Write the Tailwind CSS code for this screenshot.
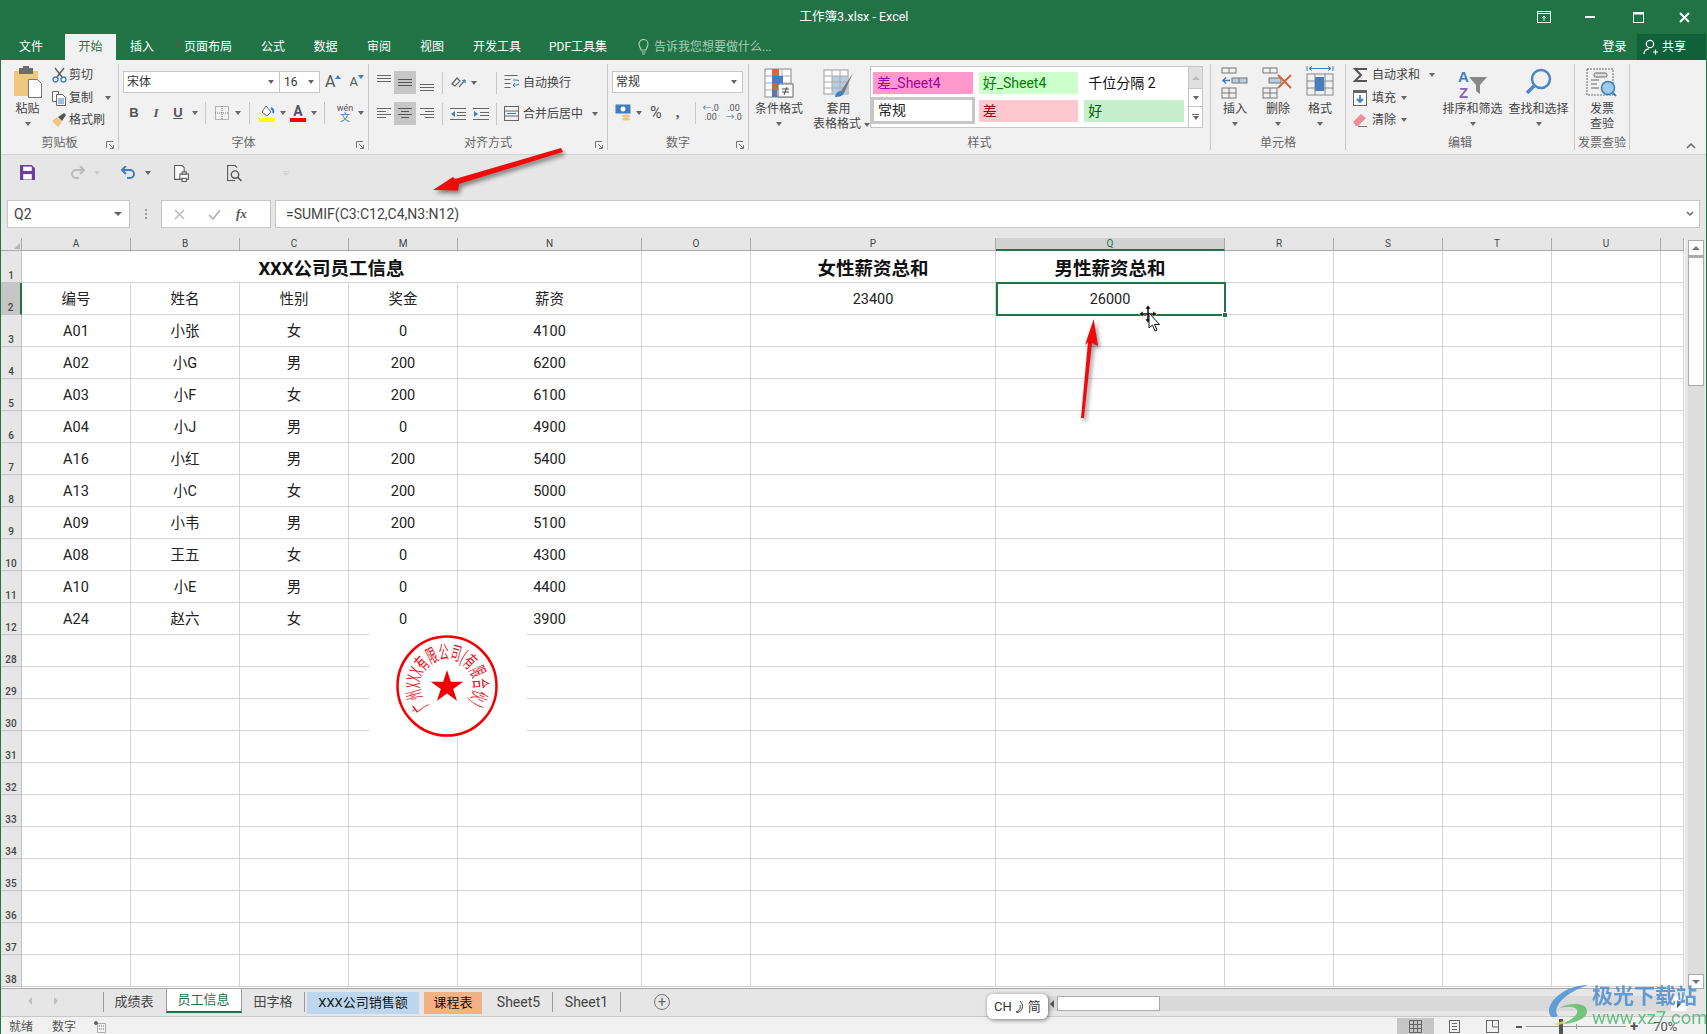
<!DOCTYPE html>
<html lang="zh-CN">
<head>
    <meta charset="UTF-8">
    <title>工作簿3.xlsx - Excel</title>
    <script src="https://cdn.jsdelivr.net/npm/@tailwindcss/browser@4"></script>
</head>
<body class="bg-[#e6e6e6]">
<div class="relative w-[1707px] h-[1034px] overflow-hidden flex flex-col border-x border-[#217346] text-[12px] text-[#444] font-['Roboto','Noto_Sans_CJK_SC',sans-serif]">

    <!-- title bar -->
    <div class="h-[34px] shrink-0 bg-[#217346] flex items-center justify-between text-white">
        <div class="w-[1520px] pl-[186px] text-center text-[12.5px]">工作簿3.xlsx - Excel</div>
        <div class="flex items-center w-[185px]">
            <svg class="ml-[16px]" width="14" height="12" viewBox="0 0 14 12" fill="none" stroke="#fff"><rect x="0.5" y="0.5" width="13" height="11"/><path d="M1 2.5h12M7 10V5M5 7l2-2 2 2"/></svg>
            <div class="ml-[34px] w-[10px] h-[2px] bg-white"></div>
            <svg class="ml-[38px]" width="11" height="11" viewBox="0 0 11 11" fill="none" stroke="#fff"><rect x="0.5" y="0.5" width="10" height="10"/><path d="M0 1.5h11" stroke-width="2"/></svg>
            <svg class="ml-[35px]" width="11" height="11" viewBox="0 0 11 11" stroke="#fff" stroke-width="2"><path d="M1 1l9 9M10 1l-9 9"/></svg>
        </div>
    </div>

    <!-- ribbon tabs -->
    <div class="h-[26px] shrink-0 bg-[#217346] flex items-stretch text-white text-[12px] leading-[26px]">
        <div class="w-[64px] pr-[4px] text-center">文件</div>
        <div class="w-[51px] text-center bg-[#f1f1f1] text-[#217346]">开始</div>
        <div class="w-[52px] text-center">插入</div>
        <div class="w-[80px] text-center">页面布局</div>
        <div class="w-[50px] text-center">公式</div>
        <div class="w-[55px] text-center">数据</div>
        <div class="w-[52px] text-center">审阅</div>
        <div class="w-[54px] text-center">视图</div>
        <div class="w-[76px] text-center">开发工具</div>
        <div class="w-[86px] text-center">PDF工具集</div>
        <div class="ml-[16px] flex items-center gap-[4px] text-[#a9cdb8]">
            <svg width="13" height="16" viewBox="0 0 13 16" fill="none" stroke="#a9cdb8" stroke-width="1.2"><path d="M4 11c0-2-2-3-2-6a4.5 4.5 0 0 1 9 0c0 3-2 4-2 6zM4.5 13h4M5 15h3"/></svg>
            <span>告诉我您想要做什么...</span>
        </div>
        <div class="ml-auto w-[45px] text-center">登录</div>
        <div class="ml-[0px] w-[69px] bg-[#10603a] flex items-center pl-[6px] gap-[3px]">
            <svg width="16" height="16" viewBox="0 0 16 16" fill="none" stroke="#fff" stroke-width="1.2"><circle cx="7" cy="5" r="3.7"/><path d="M1 15c0-3 2-5 5-5.2M10 13h5M12.5 10.5v5"/></svg>
            <span>共享</span>
        </div>
    </div>

    <!-- ribbon -->
    <div class="h-[95px] shrink-0 bg-[#f1f1f1] border-b border-[#d2d2d2] flex items-start pt-[4px]">

        <!-- clipboard -->
        <div class="relative w-[118px] h-[86px] border-r border-[#c8c8c8] flex flex-col">
            <div class="h-[72px] flex">
                <div class="w-[50px] flex flex-col items-center pl-[3px]">
                    <svg class="h-[36px]" width="30" height="36" viewBox="0 0 30 36"><rect x="1" y="7" width="24" height="25" fill="#f0c77f"/><rect x="6" y="4" width="14" height="6" fill="#6b6b6b"/><rect x="10" y="2" width="6" height="4" fill="#6b6b6b"/><path d="M15.500 15.500h9l4 4v14h-13z" fill="#fff" stroke="#777"/></svg>
                    <div class="mt-[2px] leading-[15px]">粘贴</div>
                    <div class="mt-[5px] w-0 h-0 border-x-[3px] border-x-transparent border-t-[4px] border-t-[#666]"></div>
                </div>
                <div class="flex flex-col leading-[22.5px] pt-0">
                    <div class="flex items-center h-[22.5px]">
                        <svg class="w-[18px]" width="18" height="16" viewBox="0 0 18 16" fill="none" stroke-width="1.3"><path d="M4 1l7 9M13 1l-7 9" stroke="#555"/><circle cx="4.500" cy="12.500" r="2.500" stroke="#3f7fbf"/><circle cx="12.500" cy="12.500" r="2.500" stroke="#3f7fbf"/></svg>
                        <span>剪切</span>
                    </div>
                    <div class="flex items-center h-[22.5px]">
                        <svg class="w-[18px]" width="18" height="16" viewBox="0 0 18 16" fill="#fff" stroke="#666"><path d="M1.500 1.500h6v10h-6z"/><path d="M5.500 4.500h6l3 3v8h-9z"/><path d="M7 9h6M7 11h6M7 13h6" stroke="#3f7fbf"/></svg>
                        <span>复制</span>
                        <div class="ml-[12px] w-0 h-0 border-x-[3px] border-x-transparent border-t-[4px] border-t-[#666]"></div>
                    </div>
                    <div class="flex items-center h-[22.5px]">
                        <svg class="w-[18px]" width="18" height="16" viewBox="0 0 18 16"><path d="M1 9l5-4 5 5-4 5z" fill="#f0c77f"/><path d="M7 5l6-4 2 2-4 6z" fill="#555"/></svg>
                        <span>格式刷</span>
                    </div>
                </div>
            </div>
            <div class="h-[14px] leading-[14px] text-center text-[#666]">剪贴板</div>
            <svg class="absolute right-[4px] bottom-[1px]" width="8" height="8" viewBox="0 0 8 8" fill="none" stroke="#777"><path d="M.5 7V.5H7M3 3l4 4M4 7.500h3.500V4"/></svg>
        </div>

        <!-- font -->
        <div class="relative w-[250px] h-[86px] border-r border-[#c8c8c8] flex flex-col">
            <div class="h-[72px] pl-[4px] pt-[7px] flex flex-col gap-[8px]">
                <div class="flex h-[22px] items-center">
                    <div class="w-[157px] h-[22px] bg-white border border-[#c6c6c6] flex items-center justify-between pl-[3px] pr-[5px] text-[#333]">
                        <span>宋体</span>
                        <div class="w-0 h-0 border-x-[3px] border-x-transparent border-t-[4px] border-t-[#666]"></div>
                    </div>
                    <div class="w-[40px] h-[22px] bg-white border border-l-0 border-[#c6c6c6] flex items-center justify-between pl-[4px] pr-[5px] text-[#333]">
                        <span>16</span>
                        <div class="w-0 h-0 border-x-[3px] border-x-transparent border-t-[4px] border-t-[#666]"></div>
                    </div>
                    <div class="ml-[5px] flex items-start text-[16px] leading-[18px] text-[#555]"><span>A</span><span class="w-0 h-0 mt-[2px] border-x-[3px] border-x-transparent border-b-[4px] border-b-[#3f7fbf]"></span></div>
                    <div class="ml-[8px] flex items-start text-[13px] leading-[18px] text-[#555]"><span>A</span><span class="w-0 h-0 mt-[2px] border-x-[3px] border-x-transparent border-t-[4px] border-t-[#3f7fbf]"></span></div>
                </div>
                <div class="flex h-[23px] items-center text-[#555] text-[13px]">
                    <span class="w-[22px] text-center font-bold font-['Liberation_Sans']">B</span>
                    <span class="w-[22px] text-center italic font-bold font-['Liberation_Serif']">I</span>
                    <span class="w-[22px] text-center underline font-bold font-['Liberation_Sans']">U</span>
                    <div class="ml-[3px] w-0 h-0 border-x-[3px] border-x-transparent border-t-[4px] border-t-[#666]"></div>
                    <div class="ml-[7px] w-px h-[22px] bg-[#c8c8c8]"></div>
                    <svg class="ml-[9px]" width="14" height="14" viewBox="0 0 14 14" fill="none" stroke="#777" stroke-dasharray="1 1"><rect x=".5" y=".5" width="13" height="13"/><path d="M7 0v14M0 7h14"/></svg>
                    <div class="ml-[6px] w-0 h-0 border-x-[3px] border-x-transparent border-t-[4px] border-t-[#666]"></div>
                    <div class="ml-[8px] w-px h-[22px] bg-[#c8c8c8]"></div>
                    <svg class="ml-[9px]" width="16" height="18" viewBox="0 0 16 18"><path d="M3 8l4-6 5 6-4 4z" fill="#fff" stroke="#666"/><path d="M12 4c2 1 3 3 2 5" stroke="#3f7fbf" stroke-width="2" fill="none"/><rect y="14" width="16" height="4" fill="#ffff00"/></svg>
                    <div class="ml-[5px] w-0 h-0 border-x-[3px] border-x-transparent border-t-[4px] border-t-[#666]"></div>
                    <div class="ml-[4px] w-[16px] flex flex-col items-center text-[14px] leading-[14px] font-bold">A<div class="w-[16px] h-[4px] bg-[#ff0000]"></div></div>
                    <div class="ml-[5px] w-0 h-0 border-x-[3px] border-x-transparent border-t-[4px] border-t-[#666]"></div>
                    <div class="ml-[7px] w-px h-[22px] bg-[#c8c8c8]"></div>
                    <div class="ml-[11px] w-[18px] flex flex-col items-center text-[9px] leading-[9px]"><span>wén</span><span class="text-[#3f7fbf] text-[10px]">文</span></div>
                    <div class="ml-[4px] w-0 h-0 border-x-[3px] border-x-transparent border-t-[4px] border-t-[#666]"></div>
                </div>
            </div>
            <div class="h-[14px] leading-[14px] text-center text-[#666]">字体</div>
            <svg class="absolute right-[4px] bottom-[1px]" width="8" height="8" viewBox="0 0 8 8" fill="none" stroke="#777"><path d="M.5 7V.5H7M3 3l4 4M4 7.500h3.500V4"/></svg>
        </div>

        <!-- alignment -->
        <div class="relative w-[239px] h-[86px] border-r border-[#c8c8c8] flex flex-col">
            <div class="h-[72px] pl-[4px] pt-[7px] flex flex-col gap-[8px]">
                <div class="flex h-[23px] items-center">
                    <div class="w-[21px] h-[23px] flex justify-center pt-[4px]"><svg width="14" height="8" viewBox="0 0 14 8" stroke="#666"><path d="M0 .5h14M0 3.500h14M0 6.500h14"/></svg></div>
                    <div class="w-[22px] h-[23px] flex justify-center items-center bg-[#c6c6c6]"><svg width="14" height="8" viewBox="0 0 14 8" stroke="#555"><path d="M0 .5h14M0 3.500h14M0 6.500h14"/></svg></div>
                    <div class="w-[21px] h-[23px] flex justify-center items-end pb-[3px]"><svg width="14" height="8" viewBox="0 0 14 8" stroke="#666"><path d="M0 1.500h14M0 4.500h14M0 7.500h14"/></svg></div>
                    <div class="ml-[5px] w-px h-[22px] bg-[#c8c8c8]"></div>
                    <svg class="ml-[8px]" width="16" height="14" viewBox="0 0 16 14" fill="none" stroke="#666" stroke-width="1.2"><path d="M1 8l5-6 3 3-5 5zM8 11l6-7"/><path d="M14 4l-3 .5M14 4v3" stroke="#3f7fbf"/></svg>
                    <div class="ml-[4px] w-0 h-0 border-x-[3px] border-x-transparent border-t-[4px] border-t-[#666]"></div>
                    <div class="ml-[19px] w-px h-[22px] bg-[#c8c8c8]"></div>
                    <svg class="ml-[7px]" width="15" height="15" viewBox="0 0 15 15" fill="none" stroke="#666"><path d="M.5.5h13M.5 4.500h6M.5 8.500h6M.5 12.500h6"/><path d="M9 10h4a2 2 0 0 0 0-5H9M9 10l2-2M9 10l2 2" stroke="#3f7fbf"/></svg>
                    <span class="ml-[4px]">自动换行</span>
                </div>
                <div class="flex h-[23px] items-center">
                    <div class="w-[21px] flex justify-center"><svg width="14" height="11" viewBox="0 0 14 11" stroke="#666"><path d="M0 .5h14M0 3.500h9M0 6.500h14M0 9.500h9"/></svg></div>
                    <div class="w-[22px] h-[23px] flex justify-center items-center bg-[#c6c6c6]"><svg width="14" height="11" viewBox="0 0 14 11" stroke="#555"><path d="M0 .5h14M3 3.500h8M0 6.500h14M3 9.500h8"/></svg></div>
                    <div class="w-[21px] flex justify-center"><svg width="14" height="11" viewBox="0 0 14 11" stroke="#666"><path d="M0 .5h14M5 3.500h9M0 6.500h14M5 9.500h9"/></svg></div>
                    <div class="ml-[5px] w-px h-[22px] bg-[#c8c8c8]"></div>
                    <svg class="ml-[7px]" width="16" height="12" viewBox="0 0 16 12" stroke="#666"><path d="M0 .5h16M7 4.500h9M7 7.500h9M0 11.500h16"/><path d="M5 3L1 6l4 3z" fill="#3f7fbf" stroke="none"/></svg>
                    <svg class="ml-[7px]" width="16" height="12" viewBox="0 0 16 12" stroke="#666"><path d="M0 .5h16M7 4.500h9M7 7.500h9M0 11.500h16"/><path d="M1 3l4 3-4 3z" fill="#3f7fbf" stroke="none"/></svg>
                    <div class="ml-[7px] w-px h-[22px] bg-[#c8c8c8]"></div>
                    <svg class="ml-[7px]" width="15" height="15" viewBox="0 0 15 15" fill="none" stroke="#666"><rect x=".5" y=".5" width="14" height="14"/><path d="M0 5h15M0 10h15"/><path d="M3 7.500h9" stroke="#3f7fbf"/></svg>
                    <span class="ml-[4px]">合并后居中</span>
                    <div class="ml-[9px] w-0 h-0 border-x-[3px] border-x-transparent border-t-[4px] border-t-[#666]"></div>
                </div>
            </div>
            <div class="h-[14px] leading-[14px] text-center text-[#666]">对齐方式</div>
            <svg class="absolute right-[4px] bottom-[1px]" width="8" height="8" viewBox="0 0 8 8" fill="none" stroke="#777"><path d="M.5 7V.5H7M3 3l4 4M4 7.500h3.500V4"/></svg>
        </div>

        <!-- number -->
        <div class="relative w-[141px] h-[86px] border-r border-[#c8c8c8] flex flex-col">
            <div class="h-[72px] pl-[4px] pt-[7px] flex flex-col gap-[8px]">
                <div class="w-[131px] h-[22px] bg-white border border-[#c6c6c6] flex items-center justify-between pl-[3px] pr-[5px] text-[#333]">
                    <span>常规</span>
                    <div class="w-0 h-0 border-x-[3px] border-x-transparent border-t-[4px] border-t-[#666]"></div>
                </div>
                <div class="flex h-[23px] items-center text-[#555]">
                    <svg class="ml-[3px]" width="17" height="17" viewBox="0 0 17 17"><rect x=".5" y=".5" width="15" height="9" fill="#3f7fbf"/><circle cx="8" cy="5" r="2.500" fill="#fff"/><ellipse cx="11" cy="12" rx="4" ry="1.500" fill="#f0c77f"/><ellipse cx="11" cy="15" rx="4" ry="1.500" fill="#f0c77f"/></svg>
                    <div class="ml-[4px] w-0 h-0 border-x-[3px] border-x-transparent border-t-[4px] border-t-[#666]"></div>
                    <span class="ml-[8px] text-[16px]">%</span>
                    <span class="ml-[14px] text-[15px] font-bold font-['Liberation_Serif']">,</span>
                    <div class="ml-[16px] w-px h-[22px] bg-[#c8c8c8]"></div>
                    <div class="ml-[6px] w-[16px] text-[9px] leading-[9px] text-center"><span class="text-[#3f7fbf]">←</span>.0<br>.00</div>
                    <div class="ml-[7px] w-[16px] text-[9px] leading-[9px] text-center">.00<br><span class="text-[#3f7fbf]">→</span>.0</div>
                </div>
            </div>
            <div class="h-[14px] leading-[14px] text-center text-[#666]">数字</div>
            <svg class="absolute right-[4px] bottom-[1px]" width="8" height="8" viewBox="0 0 8 8" fill="none" stroke="#777"><path d="M.5 7V.5H7M3 3l4 4M4 7.500h3.500V4"/></svg>
        </div>

        <!-- styles -->
        <div class="w-[462px] h-[86px] border-r border-[#c8c8c8] flex flex-col">
            <div class="h-[72px] flex">
                <div class="w-[58px] ml-[1px] flex flex-col items-center">
                    <svg class="h-[36px]" width="30" height="36" viewBox="0 0 30 36" fill="none"><rect x="1" y="5" width="26" height="28" fill="#fff" stroke="#888"/><path d="M1 12h26M1 19h26M1 26h26M9 5v28M18 5v28" stroke="#aaa"/><rect x="8" y="5" width="7" height="7" fill="#d6663e"/><rect x="8" y="12" width="11" height="7" fill="#4a7ebb"/><rect x="8" y="19" width="8" height="7" fill="#d6663e"/><rect x="8" y="26" width="5" height="7" fill="#4a7ebb"/><rect x="14" y="20" width="15" height="13" fill="#fff" stroke="#666"/><path d="M18 25h7M18 28h7M23 23l-3 8" stroke="#444"/></svg>
                    <div class="mt-[2px] leading-[15px]">条件格式</div>
                    <div class="mt-[5px] w-0 h-0 border-x-[3px] border-x-transparent border-t-[4px] border-t-[#666]"></div>
                </div>
                <div class="w-[61px] flex flex-col items-center">
                    <svg class="h-[36px]" width="32" height="36" viewBox="0 0 32 36" fill="none"><rect x="1" y="6" width="24" height="24" fill="#fff" stroke="#999"/><rect x="9" y="12" width="16" height="18" fill="#b8cde4"/><path d="M1 12h24M1 18h24M1 24h24M9 6v24M17 6v24" stroke="#aaa"/><path d="M30 9L18 27l3 2z" fill="#777"/><path d="M18 27c-3 0-6 3-6 6 4 0 8-1 9-4z" fill="#3f7fbf"/></svg>
                    <div class="mt-[2px] leading-[15px]">套用</div>
                    <div class="leading-[15px] whitespace-nowrap flex items-center gap-[3px] ml-[6px]">表格格式<div class="w-0 h-0 border-x-[3px] border-x-transparent border-t-[4px] border-t-[#666]"></div></div>
                </div>
                <div class="ml-[1px] mt-[2px] w-[319px] h-[62px] bg-white border border-[#c6c6c6] grid grid-cols-3 grid-rows-[22px_22px] gap-x-[6px] gap-y-[6px] pl-[2px] pt-[5px] pr-[4px] text-[14px] leading-[22px]">
                    <div class="h-[22px] bg-[#ff99cc] text-[#a3009e] pl-[4px]">差_Sheet4</div>
                    <div class="h-[22px] bg-[#ccffcc] text-[#008000] pl-[4px]">好_Sheet4</div>
                    <div class="h-[22px] text-[#111] pl-[4px]">千位分隔 2</div>
                    <div class="h-[27px] -mt-[3px] -ml-[2px] mr-[-2px] bg-white border-[3px] border-[#c6c6c6] text-[#222] pl-[4px] leading-[21px]">常规</div>
                    <div class="h-[22px] bg-[#ffc7ce] text-[#9c0006] pl-[4px]">差</div>
                    <div class="h-[22px] bg-[#c6efce] text-[#006100] pl-[4px]">好</div>
                </div>
                <div class="mt-[2px] w-[14px] h-[62px] flex flex-col border border-l-0 border-[#c6c6c6]">
                    <div class="h-[21px] bg-[#e0e0e0] flex justify-center items-center"><div class="w-0 h-0 border-x-[4px] border-x-transparent border-b-[4px] border-b-[#bbb]"></div></div>
                    <div class="h-[19px] bg-white border-y border-[#c6c6c6] flex justify-center items-center"><div class="w-0 h-0 border-x-[3px] border-x-transparent border-t-[4px] border-t-[#666]"></div></div>
                    <div class="flex-1 bg-white flex flex-col justify-center items-center gap-[1px]"><div class="w-[7px] h-px bg-[#666]"></div><div class="w-0 h-0 border-x-[3px] border-x-transparent border-t-[4px] border-t-[#666]"></div></div>
                </div>
            </div>
            <div class="h-[14px] leading-[14px] text-center text-[#666]">样式</div>
        </div>

        <!-- cells -->
        <div class="w-[135px] h-[86px] border-r border-[#c8c8c8] flex flex-col">
            <div class="h-[72px] flex pl-[2px]">
                <div class="w-[44px] flex flex-col items-center">
                    <svg class="h-[36px]" width="30" height="36" viewBox="0 0 30 36" fill="none" stroke="#777"><rect x="2" y="4" width="14" height="5"/><path d="M9 4v5"/><rect x="12" y="14" width="15" height="5" fill="#b8cde4"/><path d="M19 14v5"/><rect x="2" y="24" width="14" height="10"/><path d="M9 24v10M2 29h14"/><path d="M10 16.500H3M6 13.500l-3 3 3 3" stroke="#3f7fbf" stroke-width="1.500"/></svg>
                    <div class="mt-[2px] leading-[15px]">插入</div>
                    <div class="mt-[5px] w-0 h-0 border-x-[3px] border-x-transparent border-t-[4px] border-t-[#666]"></div>
                </div>
                <div class="w-[42px] flex flex-col items-center">
                    <svg class="h-[36px]" width="32" height="36" viewBox="0 0 32 36" fill="none" stroke="#777"><rect x="1" y="4" width="14" height="5"/><path d="M8 4v5"/><rect x="7" y="14" width="12" height="5" fill="#b8cde4"/><rect x="1" y="24" width="14" height="10"/><path d="M8 24v10M1 29h14"/><path d="M16 11l13 13M29 11L16 24" stroke="#d6663e" stroke-width="2"/></svg>
                    <div class="mt-[2px] leading-[15px]">删除</div>
                    <div class="mt-[5px] w-0 h-0 border-x-[3px] border-x-transparent border-t-[4px] border-t-[#666]"></div>
                </div>
                <div class="w-[42px] flex flex-col items-center">
                    <svg class="h-[36px]" width="28" height="36" viewBox="0 0 28 36" fill="none" stroke="#888"><path d="M1 2v5M27 2v5M3 4.500h22M3 4.500l3-2M3 4.500l3 2M25 4.500l-3-2M25 4.500l-3 2" stroke="#3f7fbf"/><rect x="1" y="10" width="26" height="21"/><path d="M1 17h26M1 24h26M9 10v21M19 10v21"/><rect x="9" y="13" width="9" height="14" fill="#4a7ebb" stroke="none"/></svg>
                    <div class="mt-[2px] leading-[15px]">格式</div>
                    <div class="mt-[5px] w-0 h-0 border-x-[3px] border-x-transparent border-t-[4px] border-t-[#666]"></div>
                </div>
            </div>
            <div class="h-[14px] leading-[14px] text-center text-[#666]">单元格</div>
        </div>

        <!-- editing -->
        <div class="w-[229px] h-[86px] border-r border-[#c8c8c8] flex flex-col">
            <div class="h-[72px] flex">
                <div class="w-[96px] pl-[6px] flex flex-col">
                    <div class="flex items-center h-[22.5px]">
                        <svg class="w-[20px]" width="20" height="16" viewBox="0 0 20 16" fill="none" stroke="#555" stroke-width="2"><path d="M15 2H3l6 6-6 6h12"/></svg>
                        <span>自动求和</span>
                        <div class="ml-[9px] w-0 h-0 border-x-[3px] border-x-transparent border-t-[4px] border-t-[#666]"></div>
                    </div>
                    <div class="flex items-center h-[22.5px]">
                        <svg class="w-[20px]" width="20" height="16" viewBox="0 0 20 16" fill="#fff" stroke="#666"><rect x="1.500" y=".5" width="13" height="15"/><path d="M1 2h14" stroke-width="2"/><path d="M8 5v7M5 9l3 3 3-3" stroke="#3f7fbf" stroke-width="1.800" fill="none"/></svg>
                        <span>填充</span>
                        <div class="ml-[5px] w-0 h-0 border-x-[3px] border-x-transparent border-t-[4px] border-t-[#666]"></div>
                    </div>
                    <div class="flex items-center h-[22.5px]">
                        <svg class="w-[20px]" width="20" height="16" viewBox="0 0 20 16"><path d="M1 10l8-8 5 4-8 8H4z" fill="#eb8c9f"/><path d="M6 14.500h9" stroke="#777"/></svg>
                        <span>清除</span>
                        <div class="ml-[5px] w-0 h-0 border-x-[3px] border-x-transparent border-t-[4px] border-t-[#666]"></div>
                    </div>
                </div>
                <div class="w-[61px] flex flex-col items-center whitespace-nowrap">
                    <svg class="h-[36px]" width="32" height="36" viewBox="0 0 32 36"><text x="1" y="18" font-size="15" font-weight="700" fill="#3f7fbf" font-family="Liberation Sans">A</text><text x="2" y="34" font-size="15" font-weight="700" fill="#8e5fb5" font-family="Liberation Sans">Z</text><path d="M12 13h18l-7 8v9l-4-3v-6z" fill="#888"/></svg>
                    <div class="mt-[2px] leading-[15px]">排序和筛选</div>
                    <div class="mt-[5px] w-0 h-0 border-x-[3px] border-x-transparent border-t-[4px] border-t-[#666]"></div>
                </div>
                <div class="ml-[4px] w-[63px] flex flex-col items-center whitespace-nowrap">
                    <svg class="h-[36px]" width="30" height="36" viewBox="0 0 30 36" fill="none"><circle cx="17" cy="15" r="9" stroke="#4a86c5" stroke-width="2.500"/><path d="M10 22l-7 7" stroke="#4a86c5" stroke-width="3.500"/></svg>
                    <div class="mt-[2px] leading-[15px]">查找和选择</div>
                    <div class="mt-[5px] w-0 h-0 border-x-[3px] border-x-transparent border-t-[4px] border-t-[#666]"></div>
                </div>
            </div>
            <div class="h-[14px] leading-[14px] text-center text-[#666]">编辑</div>
        </div>

        <!-- invoice -->
        <div class="w-[55px] h-[86px] border-r border-[#c8c8c8] flex flex-col">
            <div class="h-[72px] flex flex-col items-center">
                <svg class="h-[36px]" width="34" height="36" viewBox="0 0 34 36" fill="none" stroke="#666"><rect x="2" y="5" width="26" height="26" fill="#f1f1f1" stroke-dasharray="2 1"/><rect x="9" y="9" width="13" height="4" rx="1.500" fill="#ddd"/><path d="M6 16h8M6 20h6M6 24h8"/><circle cx="23" cy="24" r="6.500" fill="#9cc9ec" stroke="#3f7fbf" stroke-width="1.500"/><path d="M28 29l3 3" stroke="#3f7fbf" stroke-width="2"/></svg>
                <div class="mt-[2px] leading-[15px]">发票</div>
                <div class="leading-[15px]">查验</div>
            </div>
            <div class="h-[14px] leading-[14px] text-center text-[#666] whitespace-nowrap">发票查验</div>
        </div>
        <svg class="mt-[78px] ml-[56px]" width="10" height="7" viewBox="0 0 10 7" fill="none" stroke="#666" stroke-width="1.500"><path d="M1 6l4-4 4 4"/></svg>
    </div>

    <!-- quick access -->
    <div class="h-[45px] shrink-0 bg-[#e6e6e6] flex items-start pt-[10px]">
        <svg class="ml-[19px]" width="15" height="15" viewBox="0 0 14 14"><path d="M0 0h11l3 3v11H0z" fill="#6a429c"/><rect x="3" y="1.500" width="8" height="4" fill="#fff"/><rect x="3" y="8.500" width="8" height="5" fill="#fff"/></svg>
        <svg class="ml-[35px] mt-[1px]" width="15" height="13" viewBox="0 0 15 13" fill="none" stroke="#bbb" stroke-width="2"><path d="M14 4H6a4 4 0 0 0 0 8h3M10 0l4 4-4 4"/></svg>
        <div class="ml-[9px] mt-[6px] w-0 h-0 border-x-[3px] border-x-transparent border-t-[4px] border-t-[#ccc]"></div>
        <svg class="ml-[21px] mt-[1px]" width="15" height="13" viewBox="0 0 15 13" fill="none" stroke="#3f7fbf" stroke-width="2"><path d="M1 4h8a4 4 0 0 1 0 8H6M5 0L1 4l4 4"/></svg>
        <div class="ml-[9px] mt-[6px] w-0 h-0 border-x-[3px] border-x-transparent border-t-[4px] border-t-[#666]"></div>
        <svg class="ml-[22px]" width="17" height="17" viewBox="0 0 16 16" fill="#fff" stroke="#555"><path d="M1.500.5h7l2 2v11h-9z"/><rect x="6.500" y="8.500" width="8" height="5"/><rect x="8.500" y="6.500" width="4" height="2"/><rect x="8.500" y="12.500" width="4" height="3"/></svg>
        <svg class="ml-[36px]" width="17" height="17" viewBox="0 0 16 16" fill="none" stroke="#555"><path d="M10.500 2.500l-2-2h-7v14h7"/><circle cx="8.500" cy="9" r="3.500" stroke-width="1.300"/><path d="M11 11.500l3.500 3.500" stroke-width="1.500"/></svg>
        <div class="ml-[40px] mt-[6px] flex flex-col items-center gap-px"><div class="w-[6px] h-px bg-[#d4d4d4]"></div><div class="w-0 h-0 border-x-[3px] border-x-transparent border-t-[3px] border-t-[#d4d4d4]"></div></div>
    </div>

    <!-- formula bar -->
    <div class="h-[28px] shrink-0 flex text-[#444]">
        <div class="ml-[6px] w-[123px] bg-white border border-[#c6c6c6] flex items-center justify-between pl-[6px] pr-[7px] text-[14px]">
            <span>Q2</span>
            <div class="w-0 h-0 border-x-[4px] border-x-transparent border-t-[4px] border-t-[#666]"></div>
        </div>
        <div class="w-[31px] flex flex-col items-center justify-center gap-[2px]">
            <div class="w-[2px] h-[2px] bg-[#999]"></div><div class="w-[2px] h-[2px] bg-[#999]"></div><div class="w-[2px] h-[2px] bg-[#999]"></div>
        </div>
        <div class="w-[110px] bg-white border border-[#c6c6c6] flex items-center">
            <svg class="ml-[12px]" width="11" height="11" viewBox="0 0 11 11" stroke="#bbb" stroke-width="1.500"><path d="M1 1l9 9M10 1l-9 9"/></svg>
            <svg class="ml-[23px]" width="13" height="11" viewBox="0 0 13 11" fill="none" stroke="#bbb" stroke-width="2"><path d="M1 6l4 4 7-9"/></svg>
            <span class="ml-[15px] italic font-bold font-['Liberation_Serif'] text-[13px] text-[#555]">fx</span>
        </div>
        <div class="ml-[4px] w-[1425px] bg-white border border-[#c6c6c6] flex items-center justify-between pl-[10px] pr-[5px] text-[14px]">
            <span>=SUMIF(C3:C12,C4,N3:N12)</span>
            <svg width="8" height="6" viewBox="0 0 8 6" fill="none" stroke="#666" stroke-width="1.500"><path d="M1 1l3 3 3-3"/></svg>
        </div>
    </div>

    <!-- sheet and vertical scrollbar -->
    <div class="h-[10px] shrink-0"></div>
    <div class="h-[751px] shrink-0 flex">
        <div id="sheet" class="relative w-[1684px] h-[751px] overflow-hidden bg-white border-b border-[#a8a8a8]"></div>
        <div class="ml-[3px] w-[16px] mt-[2px] h-[749px] flex flex-col bg-[#dcdcdc]">
            <div class="h-[16px] bg-white border border-[#ababab] flex justify-center items-center"><div class="w-0 h-0 border-x-[4px] border-x-transparent border-b-[4px] border-b-[#777]"></div></div>
            <div class="h-[130px] bg-white border border-t-2 border-[#ababab]"></div>
            <div class="flex-1"></div>
            <div class="h-[15px] bg-white border border-[#ababab] flex justify-center items-center"><div class="w-0 h-0 border-x-[4px] border-x-transparent border-t-[4px] border-t-[#777]"></div></div>
        </div>
    </div>

    <!-- sheet tabs -->
    <div class="h-[28px] shrink-0 flex items-start bg-[#e6e6e6] border-b border-[#c8c8c8] text-[13px] text-[#444]">
        <div class="w-[102px] h-[24px] flex items-center pl-[27px] gap-[22px] text-[#c0c0c0]">
            <div class="w-0 h-0 border-y-[4px] border-y-transparent border-r-[4px] border-r-[#c0c0c0]"></div>
            <div class="w-0 h-0 border-y-[4px] border-y-transparent border-l-[4px] border-l-[#c0c0c0]"></div>
        </div>
        <div class="w-[63px] mt-[3px] h-[20px] leading-[20px] pr-[2px] text-center border-l border-[#9a9a9a]">成绩表</div>
        <div class="w-[76px] h-[24px] leading-[22px] pr-[1px] text-center bg-white text-[#217346] border-x border-[#9a9a9a] border-b-2 border-b-[#217346]">员工信息</div>
        <div class="w-[63px] mt-[3px] h-[20px] leading-[20px] text-center border-r border-[#9a9a9a]">田字格</div>
        <div class="ml-[2px] w-[112px] mt-[3px] h-[22px] leading-[21px] text-center bg-[#bdd7ee] text-[#111]">XXX公司销售额</div>
        <div class="ml-[5px] w-[58px] mt-[3px] h-[22px] leading-[21px] text-center bg-[#f4b183] text-[#111]">课程表</div>
        <div class="ml-[3px] w-[68px] mt-[3px] h-[20px] leading-[20px] text-center text-[14px] border-r border-[#9a9a9a]">Sheet5</div>
        <div class="w-[68px] mt-[3px] h-[20px] leading-[20px] text-center text-[14px] border-r border-[#9a9a9a]">Sheet1</div>
        <div class="ml-[33px] mt-[5px] w-[16px] h-[16px] rounded-full border border-[#777] flex items-center justify-center text-[14px] leading-none text-[#666]">+</div>
        <div class="ml-[377px] mt-[7px] w-[640px] h-[15px] flex bg-[#d9d9d9] items-center">
            <div class="ml-[3px] w-0 h-0 border-y-[4px] border-y-transparent border-r-[4px] border-r-[#555]"></div>
            <div class="ml-[3px] w-[103px] h-[15px] bg-white border border-[#ababab]"></div>
            <div class="ml-auto w-[16px] h-[15px] bg-white flex items-center justify-center"><div class="w-0 h-0 border-y-[4px] border-y-transparent border-l-[4px] border-l-[#555]"></div></div>
        </div>
    </div>

    <!-- status bar -->
    <div class="flex-1 bg-[#f1f1f1] flex items-center text-[12px] text-[#555]">
        <span class="ml-[8px]">就绪</span>
        <span class="ml-[19px]">数字</span>
        <svg class="ml-[18px]" width="12" height="12" viewBox="0 0 12 12" fill="none" stroke="#666"><rect x="3.500" y="2.500" width="8" height="9" stroke-dasharray="1 1"/><circle cx="2" cy="2" r="1.500" fill="#666"/><path d="M5 5h5M5 8h5" stroke-dasharray="1 1"/></svg>
        <div class="ml-[1291px] w-[37px] h-[17px] bg-[#c6c6c6] flex justify-center items-center">
            <svg width="13" height="13" viewBox="0 0 13 13" fill="none" stroke="#666"><rect x=".5" y=".5" width="12" height="12"/><path d="M4.500 0v13M8.500 0v13M0 4.500h13M0 8.500h13"/></svg>
        </div>
        <svg class="ml-[14px]" width="13" height="13" viewBox="0 0 13 13" fill="none" stroke="#666"><rect x="1.500" y=".5" width="10" height="12"/><path d="M4 3.500h5M4 6.500h5M4 9.500h5"/></svg>
        <svg class="ml-[25px]" width="13" height="13" viewBox="0 0 13 13" fill="none" stroke="#666"><rect x=".5" y=".5" width="12" height="12"/><path d="M6.500 0v7M6.500 7h6"/></svg>
        <div class="ml-[17px] w-[6px] h-[2px] bg-[#555]"></div>
        <div class="relative ml-[4px] w-[100px] h-px bg-[#9a9a9a]">
            <div class="absolute left-[33px] -top-[7px] w-[4px] h-[15px] bg-[#555]"></div>
            <div class="absolute left-[50px] -top-[2px] w-px h-[5px] bg-[#9a9a9a]"></div>
        </div>
        <span class="ml-[4px] text-[15px] leading-none font-bold">+</span>
        <span class="ml-[15px] text-[13px]">70%</span>
    </div>

    <!-- stamp pasted over the sheet -->
    <div class="absolute left-[368px] top-[634px] w-[158px] h-[104px] pr-[2px] bg-white flex items-center justify-center">
        <svg width="104" height="104" viewBox="0 0 104 104">
            <circle cx="52" cy="52" r="49.500" fill="none" stroke="#f20000" stroke-width="2.500"/>
            <polygon fill="#f00000" points="52,36 55.800,47.700 68.200,47.700 58.200,55 62,66.800 52,59.500 42,66.800 45.800,55 35.800,47.700 48.200,47.700"/>
            <defs><path id="stampArc" d="M33.600 71.700 A27 27 0 1 1 74.100 67.400"/></defs>
            <text font-size="19" fill="#e8141c" font-family="Noto Sans CJK SC, sans-serif"><textPath href="#stampArc" textLength="123" lengthAdjust="spacingAndGlyphs">广州XXX有限公司(有限合伙)</textPath></text>
        </svg>
    </div>

    <!-- selected cell -->
    <div class="absolute left-[995px] top-[282px] w-[230px] h-[34px] border-2 border-[#217346]">
        <div class="absolute -right-[4px] -bottom-[4px] w-[6px] h-[6px] bg-[#217346] border border-white"></div>
    </div>

    <!-- annotation arrows, cursor, watermark -->
    <svg class="absolute left-0 top-0 pointer-events-none" width="1707" height="1034" viewBox="0 0 1707 1034">
        <g class="drop-shadow-[2px_3px_2px_rgba(0,0,0,0.45)]" fill="#f00a0a">
            <polygon points="560,148 562,152 458,184 457,190.500 432,190 452,177 454,179"/>
            <polygon points="1092.700,319 1097,346 1091,343 1083,418 1080,418 1087,342 1084,345"/>
        </g>
        <g fill="#111" stroke="#fff" stroke-width=".5">
            <path d="M1147 305l3 4h-2v4h4v-2l4 3-4 3v-2h-4v4h2l-3 4-3-4h2v-4h-4v2l-4-3 4-3v2h4v-4h-2z"/>
        </g>
        <path d="M1148 313v15l3.500-3 2.500 6 2-1-2.500-5.500h5z" fill="#fff" stroke="#111"/>
        <g opacity=".85">
            <path d="M1587 985C1565 985 1548 1000 1548 1011C1548 1018 1554 1018 1557 1016C1550 1006 1566 992 1587 985Z" fill="#4b93d6"/>
            <path d="M1557 1009C1568 1002 1587 1002 1586 1012C1585 1020 1570 1024 1562 1024C1568 1020 1578 1016 1576 1010C1574 1006 1565 1006 1557 1009Z" fill="#62bf6c"/>
            <path d="M1562 1024C1558 1025 1555 1025 1552 1024C1556 1023 1560 1022 1565 1020Z" fill="#e6d35a"/>
            <text x="1591" y="1003" font-size="21" font-weight="700" fill="#4b8fd0" font-family="Noto Sans CJK SC, sans-serif">极光下载站</text>
            <text x="1591" y="1024" font-size="18.500" fill="#4fb874" font-family="Roboto, sans-serif">www.xz7.com</text>
        </g>
    </svg>

    <!-- input method popup -->
    <div class="absolute left-[986px] top-[994px] w-[61px] h-[25px] rounded-[6px] bg-white shadow-[1px_1px_4px_rgba(0,0,0,0.5)] flex items-center justify-center gap-[3px] text-[13px] text-[#333]">
        <span>CH</span>
        <svg width="10" height="14" viewBox="0 0 10 14" fill="none" stroke="#333"><path d="M5 1c3 3 4 8-1 11-1 .5-2 .5-3 0 3-1 5-3 4-7"/></svg>
        <span>简</span>
    </div>
</div>

<script>
    // column order and the template used by every row
    const gridClass = "grid grid-cols-[21px_109px_109px_109px_109px_184px_109px_245px_229px_109px_109px_109px_109px_23px]";
    const cellClass = "border-r border-b border-[#d4d4d4] flex items-center justify-center pt-[4px] text-[14.500px] leading-none text-[#222]";
    const headClass = "border-r border-b border-[#aaaaaa] flex items-center justify-center text-[10px] leading-none text-[#444] bg-[#e6e6e6]";
    const rowHeadClass = "border-r border-b border-[#c4c4c4] flex items-end justify-center pb-px text-[10px] leading-none font-medium text-[#444] bg-[#e6e6e6]";
    const boldClass = "border-r border-b border-[#d4d4d4] flex items-center justify-center pt-[5px] text-[18.500px] leading-none font-bold text-[#111]";

    const people = [
        ["A01","小张","女","0","4100"],
        ["A02","小G","男","200","6200"],
        ["A03","小F","女","200","6100"],
        ["A04","小J","男","0","4900"],
        ["A16","小红","男","200","5400"],
        ["A13","小C","女","200","5000"],
        ["A09","小韦","男","200","5100"],
        ["A08","王五","女","0","4300"],
        ["A10","小E","男","0","4400"],
        ["A24","赵六","女","0","3900"]
    ];
    const cols = ["A","B","C","M","N","O","P","Q","R","S","T","U",""];

    function cell(text, cls) {
        return `<div class="${cls}">${text}</div>`;
    }
    function emptyCells(n) {
        return cell("", cellClass).repeat(n);
    }

    let html = `<div class="${gridClass} h-[13px]">`;
    html += `<div class="${headClass} relative"><div class="absolute right-[1px] bottom-[1px] w-0 h-0 border-l-[6px] border-l-transparent border-b-[6px] border-b-[#b4b4b4]"></div></div>`;
    cols.forEach(c => {
        html += c === "Q"
            ? cell(c, "border-r border-b-2 border-[#aaaaaa] border-b-[#217346] flex items-center justify-center text-[10px] leading-none text-[#217346] bg-[#d2d2d2]")
            : cell(c, headClass);
    });
    html += `</div>`;

    // row 1: merged title and the two total headings
    html += `<div class="${gridClass} h-[32px]">`;
    html += cell("1", rowHeadClass);
    html += `<div class="col-span-5 ${boldClass}">XXX公司员工信息</div>`;
    html += emptyCells(1) + cell("女性薪资总和", boldClass) + cell("男性薪资总和", boldClass) + emptyCells(5);
    html += `</div>`;

    // row 2: column titles and the totals
    html += `<div class="${gridClass} h-[32px]">`;
    html += cell("2", "border-r-2 border-b border-r-[#217346] border-b-[#c4c4c4] flex items-end justify-center pb-px text-[10px] leading-none font-medium text-[#444] bg-[#c6c6c6]");
    ["编号","姓名","性别","奖金","薪资"].forEach(t => html += cell(t, cellClass));
    html += emptyCells(1) + cell("23400", cellClass) + cell("26000", cellClass) + emptyCells(5);
    html += `</div>`;

    people.forEach((p, i) => {
        html += `<div class="${gridClass} h-[32px]">`;
        html += cell(i + 3, rowHeadClass);
        p.forEach(t => html += cell(t, cellClass));
        html += emptyCells(8) + `</div>`;
    });

    for (let r = 28; r <= 38; r++) {
        html += `<div class="${gridClass} h-[32px]">` + cell(r, rowHeadClass) + emptyCells(13) + `</div>`;
    }
    document.getElementById("sheet").innerHTML = html;
</script>
</body>
</html>
